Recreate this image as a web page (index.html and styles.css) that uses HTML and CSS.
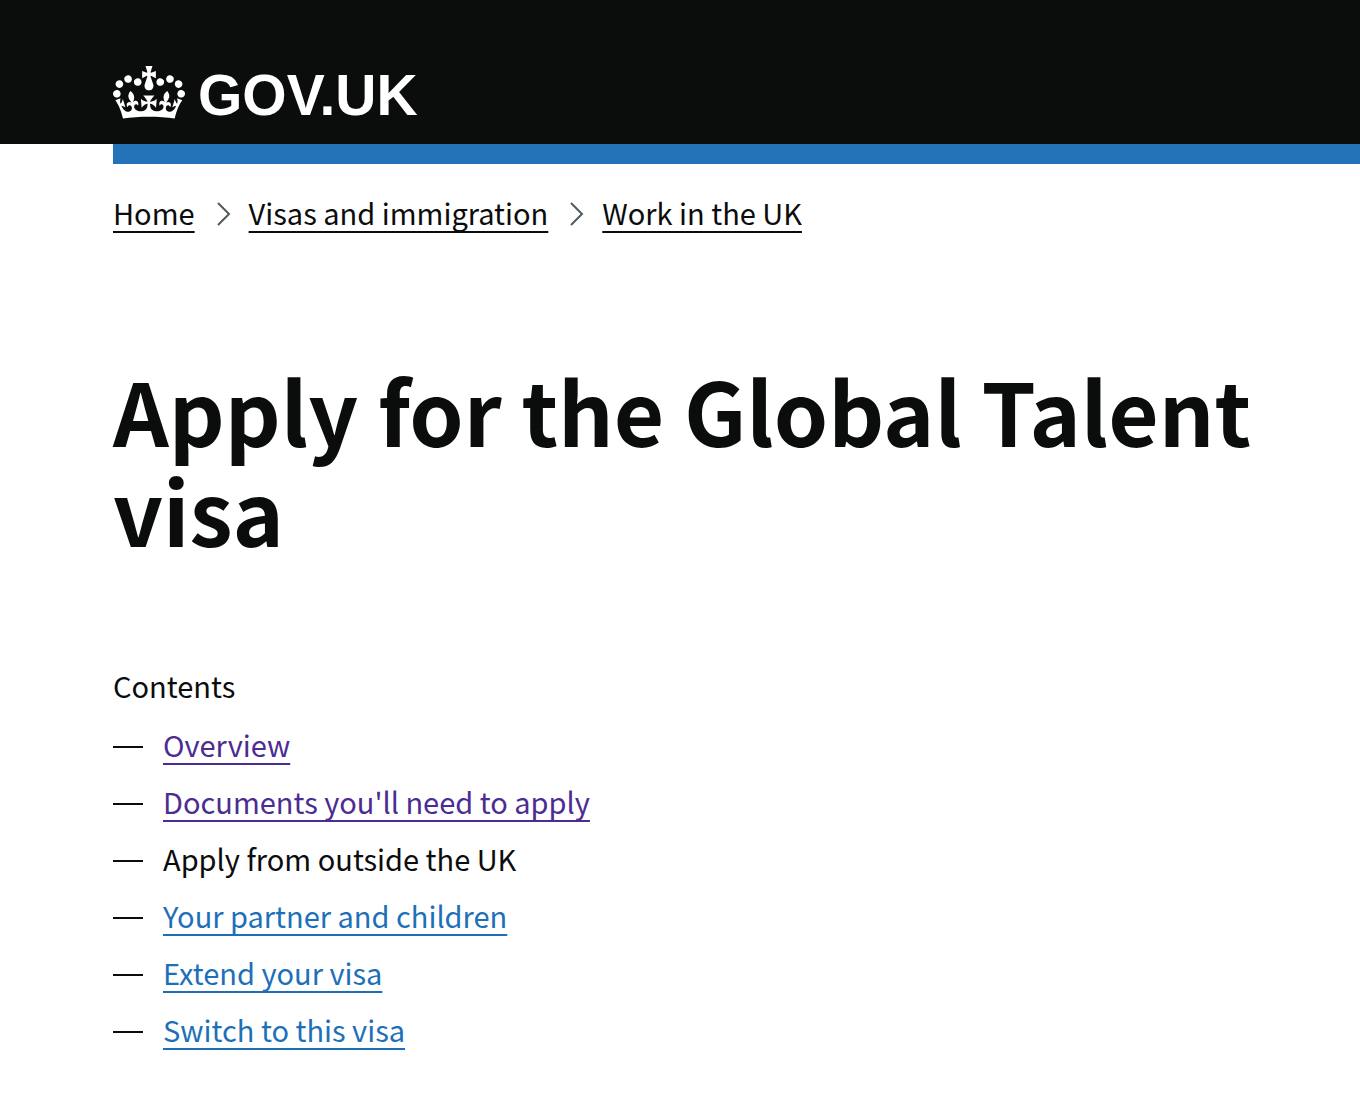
FILE: index.html
```html
<!DOCTYPE html>
<html lang="en">
<head>
<meta charset="utf-8">
<meta name="viewport" content="width=device-width, initial-scale=1">
<title>Apply for the Global Talent visa - GOV.UK</title>
<link rel="stylesheet" href="styles.css">
</head>
<body>
<header class="header">
  <a class="logo" href="#">
    <svg class="crown" viewBox="0 0 132 97" aria-hidden="true"><path fill="currentColor" fill-rule="evenodd" d="M25 30.2c3.5 1.5 7.7-.2 9.1-3.7 1.5-3.6-.2-7.8-3.9-9.2-3.6-1.4-7.6.3-9.1 3.9-1.4 3.5.3 7.5 3.9 9zM9 39.5c3.6 1.5 7.8-.2 9.2-3.7 1.5-3.6-.2-7.8-3.9-9.1-3.6-1.5-7.6.2-9.1 3.8-1.4 3.5.3 7.5 3.8 9zM4.4 57.2c3.5 1.5 7.7-.2 9.1-3.8 1.5-3.6-.2-7.7-3.9-9.1-3.5-1.5-7.6.3-9.1 3.8-1.4 3.5.3 7.6 3.9 9.1zm38.3-21.4c3.5 1.5 7.7-.2 9.1-3.8 1.5-3.6-.2-7.7-3.9-9.1-3.6-1.5-7.6.3-9.1 3.8-1.3 3.6.4 7.7 3.9 9.1zm64.4-5.6c-3.6 1.5-7.8-.2-9.1-3.7-1.5-3.6.2-7.8 3.8-9.2 3.6-1.4 7.7.3 9.2 3.9 1.3 3.5-.4 7.5-3.9 9zm15.9 9.3c-3.6 1.5-7.7-.2-9.1-3.7-1.5-3.6.2-7.8 3.7-9.1 3.6-1.5 7.7.2 9.2 3.8 1.5 3.5-.3 7.5-3.8 9zm4.7 17.7c-3.6 1.5-7.8-.2-9.2-3.8-1.5-3.6.2-7.7 3.9-9.1 3.6-1.5 7.7.3 9.2 3.8 1.3 3.5-.4 7.6-3.9 9.1zM89.3 35.8c-3.6 1.5-7.8-.2-9.2-3.8-1.4-3.6.2-7.7 3.9-9.1 3.6-1.5 7.7.3 9.2 3.8 1.4 3.6-.3 7.7-3.9 9.1zM69.7 17.7l8.9 4.7V9.3l-8.9 2.8c-.2-.3-.5-.6-.9-.9L72.4 0H59.6l3.5 11.2c-.3.3-.6.5-.9.9l-8.8-2.8v13.1l8.8-4.7c.3.3.6.7.9.9l-5 15.4v.1c-.2.8-.4 1.6-.4 2.4 0 4.1 3.1 7.5 7 8.1h.2c.3 0 .7.1 1 .1.4 0 .7 0 1-.1h.2c4-.6 7.1-4.1 7.1-8.1 0-.8-.1-1.7-.4-2.4V34l-5.1-15.4c.4-.2.7-.6 1-.9zM66 92.8c16.9 0 32.8 1.1 47.1 3.2 4-16.9 8.9-26.7 14-33.5l-9.6-3.4c1 4.9 1.1 7.2 0 10.2-1.5-1.4-3-4.3-4.2-8.7L108.6 76c2.8-2 5-3.2 7.5-3.3-4.4 9.4-10 11.9-13.6 11.2-4.3-.8-6.3-4.6-5.6-7.9 1-4.7 5.7-5.9 8-.5 4.3-8.7-3-11.4-7.6-8.8 7.1-7.2 7.9-13.5 2.1-21.1-8 6.1-8.1 12.3-4.5 20.8-4.7-5.4-12.1-2.5-9.5 6.2 3.4-5.2 7.9-2 7.2 3.1-.6 4.3-6.4 7.8-13.5 7.2-10.3-.9-10.9-8-11.2-13.8 2.5-.5 7.1 1.8 11 7.3L80.2 60c-4.1 4.4-8 5.3-12.3 5.4 1.4-4.4 8-11.6 8-11.6H55.5s6.4 7.2 7.9 11.6c-4.2-.1-8-1-12.3-5.4l1.4 16.4c3.9-5.5 8.5-7.7 10.9-7.3-.3 5.8-.9 12.8-11.1 13.8-7.2.6-12.9-2.9-13.5-7.2-.7-5 3.8-8.3 7.1-3.1 2.7-8.7-4.6-11.6-9.4-6.2 3.7-8.5 3.6-14.7-4.6-20.8-5.8 7.6-5 13.9 2.2 21.1-4.7-2.6-11.9.1-7.7 8.8 2.3-5.5 7.1-4.2 8.1.5.7 3.3-1.3 7.1-5.7 7.9-3.5.7-9-1.8-13.5-11.2 2.5.1 4.7 1.3 7.5 3.3l-4.7-15.4c-1.2 4.4-2.7 7.2-4.3 8.7-1.1-3-.9-5.3 0-10.2l-9.5 3.4c5 6.9 9.9 16.7 14 33.5 14.8-2.1 30.8-3.2 47.7-3.2z"/></svg>
    <span class="logo-text">GOV.UK</span>
  </a>
</header>
<div class="container">
  <div class="bar"></div>
  <nav aria-label="Breadcrumb">
    <ol class="breadcrumbs">
      <li><a class="link" href="#">Home</a></li>
      <li><svg class="chevron" viewBox="0 0 14 24" aria-hidden="true"><path d="M1 1l11 11L1 23"/></svg><a class="link" href="#">Visas and immigration</a></li>
      <li><svg class="chevron" viewBox="0 0 14 24" aria-hidden="true"><path d="M1 1l11 11L1 23"/></svg><a class="link" href="#">Work in the UK</a></li>
    </ol>
  </nav>
  <main>
    <h1 class="title">Apply for the Global Talent visa</h1>
    <nav aria-labelledby="contents">
      <h2 class="contents-title" id="contents">Contents</h2>
      <ol class="contents">
        <li><a class="link link-visited" href="#">Overview</a></li>
        <li><a class="link link-visited" href="#">Documents you'll need to apply</a></li>
        <li aria-current="page">Apply from outside the UK</li>
        <li><a class="link link-new" href="#">Your partner and children</a></li>
        <li><a class="link link-new" href="#">Extend your visa</a></li>
        <li><a class="link link-new" href="#">Switch to this visa</a></li>
      </ol>
    </nav>
  </main>
</div>
</body>
</html>
```
FILE: styles.css
```css
* {
  box-sizing: border-box;
}

body {
  margin: 0;
  background: #fff;
  color: #0b0c0c;
  font-family: "Noto Sans CJK SC", sans-serif;
  font-size: 29px;
  line-height: 40px;
}

ol {
  margin: 0;
  padding: 0;
  list-style: none;
}

.header {
  padding: 64px 80px 24px 113px;
  background: #0b0c0c;
}

.logo {
  display: inline-flex;
  align-items: center;
  gap: 13px;
  height: 56px;
  color: #fff;
  text-decoration: none;
  vertical-align: top;
}

.crown {
  width: 72px;
  height: 53px;
}

.logo-text {
  padding-top: 6px;
  font-family: "Liberation Sans", Arial, sans-serif;
  font-size: 57px;
  font-weight: 700;
  line-height: 56px;
}

.container {
  padding-left: 113px;
}

.bar {
  height: 20px;
  background: #2472b7;
}

.breadcrumbs {
  display: flex;
  flex-wrap: wrap;
  gap: 22px;
  padding: 28px 80px 0 0;
}

.breadcrumbs li {
  display: flex;
  align-items: center;
  gap: 18px;
}

.chevron {
  width: 14px;
  height: 24px;
  margin-top: 4px;
  fill: none;
  stroke: #505a5f;
  stroke-width: 2;
}

.link {
  color: inherit;
  text-decoration: underline;
  text-decoration-thickness: 2px;
  text-decoration-skip-ink: none;
  text-underline-offset: 6px;
}

.link-visited {
  color: #4c2c92;
}

.link-new {
  color: #1d70b8;
}

.title {
  margin: 127px 20px 106px 0;
  font-size: 87px;
  font-weight: 700;
  line-height: 100px;
}

.contents-title {
  margin: 0 0 19px;
  font-size: 29px;
  font-weight: 400;
}

.contents {
  display: grid;
  gap: 17px;
  padding-bottom: 40px;
}

.contents li {
  display: flex;
  align-items: center;
  gap: 20px;
}

.contents li::before {
  content: "";
  flex: none;
  width: 30px;
  height: 2px;
  margin-top: 6px;
  background: #0b0c0c;
}
```
